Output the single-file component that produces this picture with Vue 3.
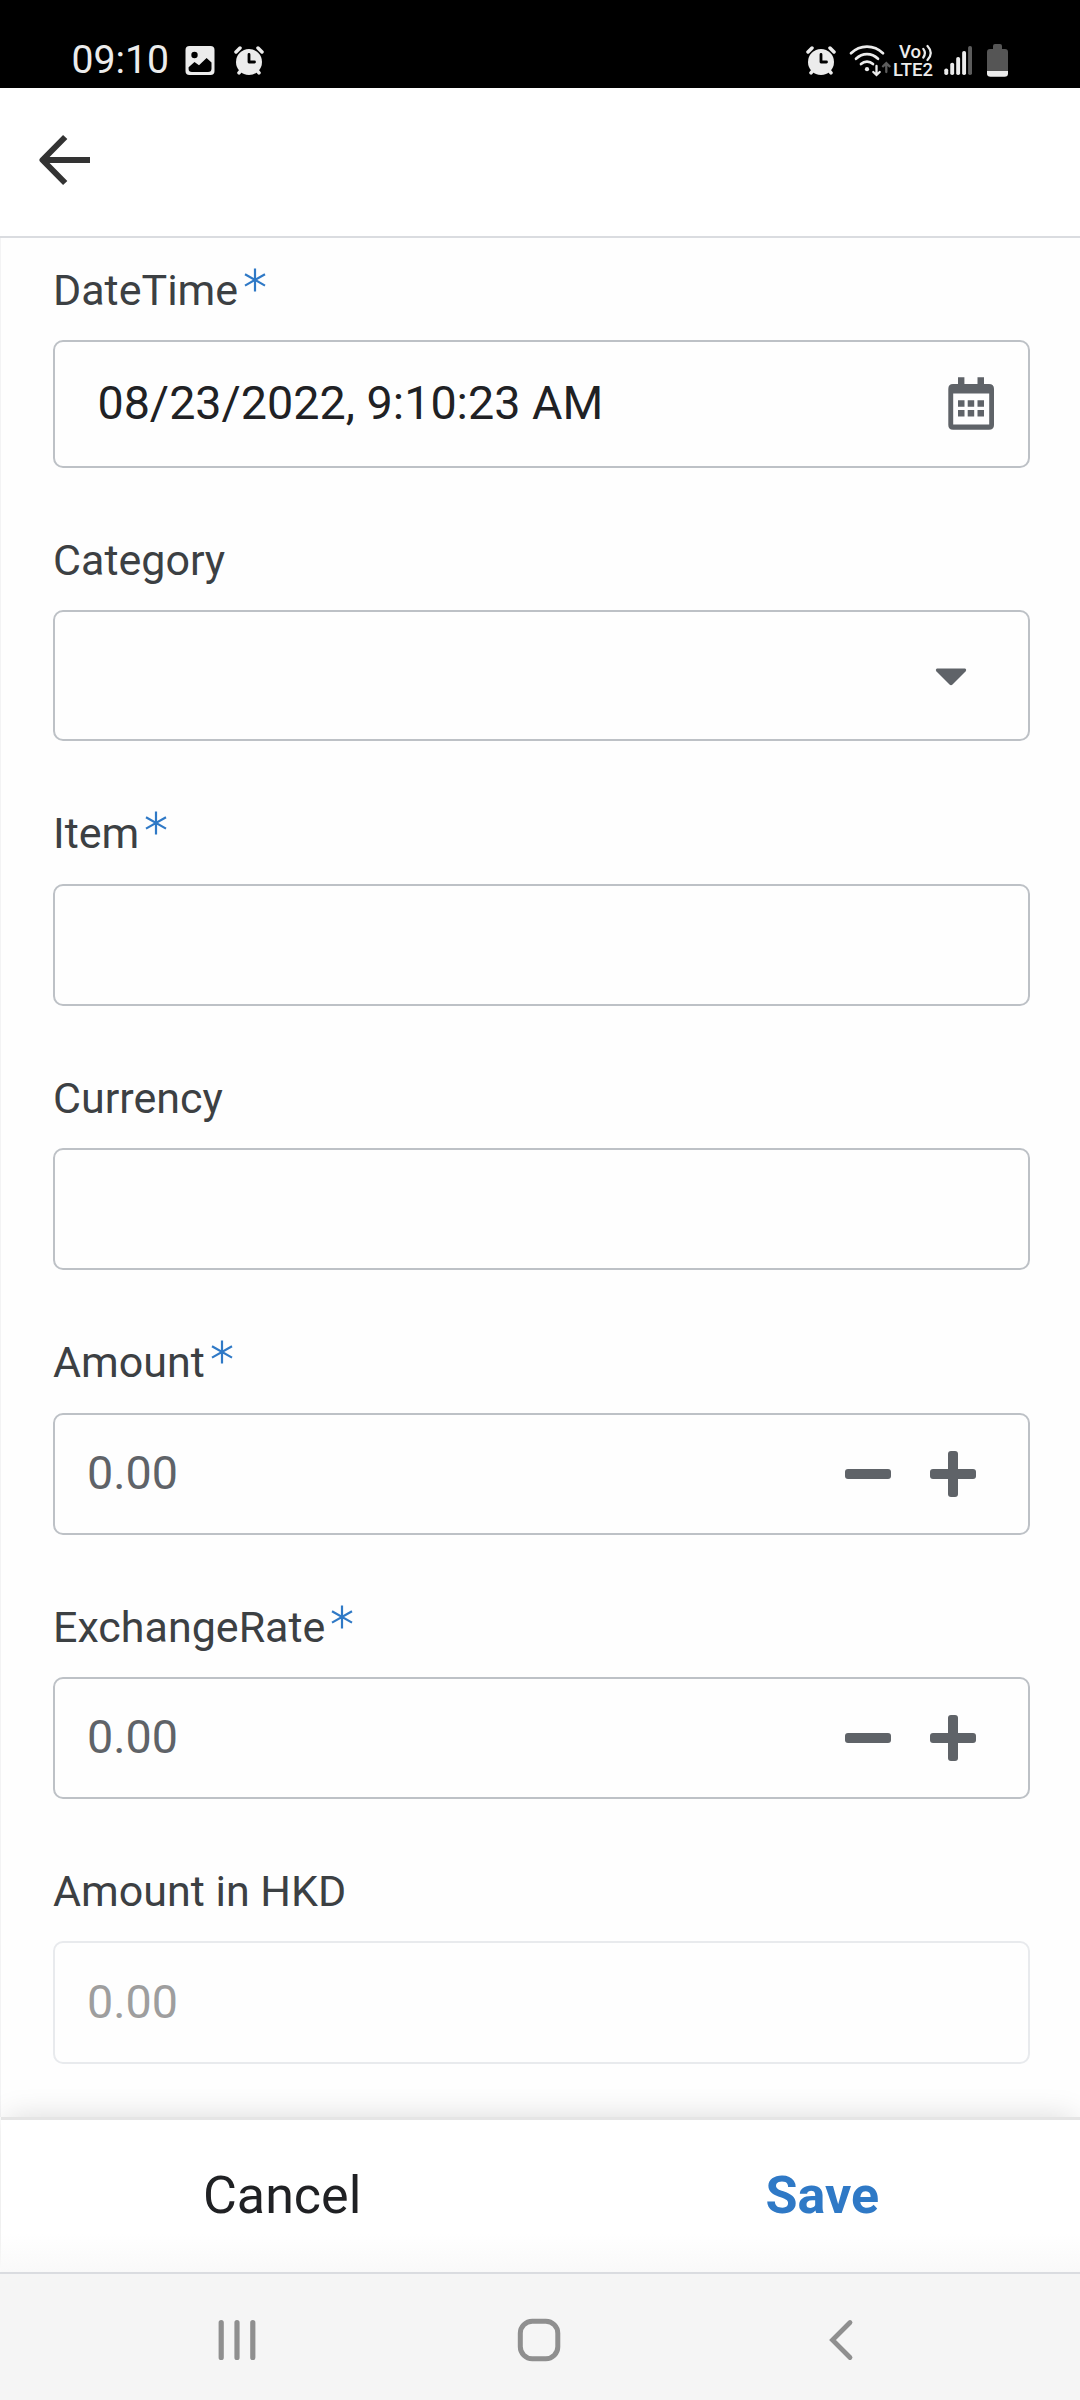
<template>
  <div class="screen">
    <div class="status">
      <div class="status__side">
        <span class="status__time">09:10</span>
        <svg width="30" height="34" viewBox="0 0 30 34">
          <rect x="0.5" y="2" width="29" height="29" rx="4" fill="#ececec" />
          <circle cx="9.5" cy="11" r="3.2" fill="#000" />
          <path d="M3.6 23.2 L9.5 18 L14 21.2 L21.6 14 L26.5 18.6 V24.5 Q26.5 28 23 28 H7 Q3.6 28 3.6 25Z" fill="#000" />
        </svg>
        <svg class="status__alarm" width="30" height="34" viewBox="0 0 30 34">
          <g id="alarm">
            <path d="M2 8 L6 4 M28 8 L24 4 M5 28.8 L8 25 M25 28.8 L22 25" stroke="#ececec" stroke-width="3.5" stroke-linecap="round" />
            <circle cx="15" cy="18" r="13" fill="#ececec" />
            <path d="M15 10.5 V18 H20.5" fill="none" stroke="#000" stroke-width="2.8" stroke-linecap="round" stroke-linejoin="round" />
          </g>
        </svg>
      </div>
      <div class="status__side">
        <svg width="30" height="34" viewBox="0 0 30 34">
          <use href="#alarm" />
        </svg>
        <svg class="status__wifi" width="42" height="34" viewBox="0 0 42 34">
          <g fill="none" stroke="#ececec" stroke-width="2.7" stroke-linecap="round">
            <path d="M2 9.3 C11 0.3 25 0.3 34 9.3" />
            <path d="M7 14.8 C13.5 8.6 22.5 8.6 29 14.8" />
            <path d="M12 20 C15.5 16.8 20.5 16.8 24 20" />
            <path d="M27.5 22 V30.5 M24.3 28 L27.5 31 L30.7 28" stroke-width="2.3" />
            <path d="M37.3 28 V20 M34 22.3 L37.3 19.2 L40.6 22.3" stroke="#5c5c5c" stroke-width="2.3" />
          </g>
          <circle cx="18" cy="25.2" r="2.1" fill="#ececec" />
        </svg>
        <div class="volte">
          <div class="volte__top">
            <span>Vo</span>
            <svg width="12" height="18" viewBox="0 0 12 18">
              <path d="M2.3 4.8 Q5.5 9 2.3 13.5 M6.5 2 Q13 9 6.5 16" fill="none" stroke="#ececec" stroke-width="2.2" stroke-linecap="round" />
            </svg>
          </div>
          <span class="volte__band">LTE2</span>
        </div>
        <svg class="status__signal" width="29" height="34" viewBox="0 0 29 34">
          <rect
            v-for="(top, i) in signalBars"
            :key="top"
            :x="0.3 + i * 5.95"
            :y="top"
            width="3.9"
            :height="31 - top"
            rx="1.8"
            :fill="i < 4 ? '#ececec' : '#5c5c5c'"
          />
        </svg>
        <svg class="status__battery" width="21" height="34" viewBox="0 0 21 34">
          <path d="M6 2 Q6 0 8 0 H13 Q15 0 15 2 V5 H18 Q21 5 21 8 V27 H0 V8 Q0 5 3 5 H6Z" fill="#555" />
          <path d="M0 27 H21 V29.5 Q21 32.8 17.5 32.8 H3.5 Q0 32.8 0 29.5Z" fill="#ececec" />
        </svg>
      </div>
    </div>

    <header class="appbar">
      <svg width="54" height="54" viewBox="0 0 54 54">
        <path d="M51 27 H5 M26.2 4 L3.5 27 L26.2 50" fill="none" stroke="#333" stroke-width="6" stroke-linejoin="round" />
      </svg>
    </header>

    <main class="form">
      <div v-for="field in fields" :key="field.label" class="field" :class="`field--${field.type}`">
        <div class="field__label">
          <span>{{ field.label }}</span>
          <svg v-if="field.required" class="field__star" width="22" height="24" viewBox="0 0 22 24">
            <path d="M11 0.5 V23.5 M1 6.2 L21 17.6 M21 6.2 L1 17.6" stroke="#2f79c6" stroke-width="2.2" />
          </svg>
        </div>
        <div class="field__box">
          <span class="field__value">{{ field.value }}</span>
          <svg v-if="field.type === 'date'" class="field__calendar" width="46" height="53" viewBox="0 0 46 53" fill="#5f6368">
            <path fill-rule="evenodd" d="M5 7 H10 V0.3 H16.4 V7 H29.5 V0.3 H36 V7 H41 Q46 7 46 12 V48 Q46 52.7 41 52.7 H5 Q0.3 52.7 0.3 48 V12 Q0.3 7 5 7Z M5.2 16.4 V47.6 H41.2 V16.4Z" />
            <path d="M10 23.3h6.5v6.5h-6.5z M19.7 23.3h6.5v6.5h-6.5z M29.5 23.3h6.5v6.5h-6.5z M10 33h6.5v6.5h-6.5z M19.7 33h6.5v6.5h-6.5z M29.5 33h6.5v6.5h-6.5z" />
          </svg>
          <svg v-if="field.type === 'select'" class="field__caret" width="32" height="18" viewBox="0 0 32 18">
            <path d="M2 0.5 H30 Q32 1.5 30.5 3.5 L17.5 16.5 Q16 18 14.5 16.5 L1.5 3.5 Q0 1.5 2 0.5Z" fill="#5f6368" />
          </svg>
          <div v-if="field.type === 'number'" class="field__stepper">
            <svg width="46" height="46" viewBox="0 0 46 46" fill="#5f6368">
              <rect x="0" y="18" width="46" height="10" rx="3" />
            </svg>
            <svg width="46" height="46" viewBox="0 0 46 46" fill="#5f6368">
              <rect x="0" y="18" width="46" height="10" rx="3" />
              <rect x="18" y="0" width="10" height="46" rx="3" />
            </svg>
          </div>
        </div>
      </div>
    </main>

    <footer class="actions">
      <span class="actions__cancel">Cancel</span>
      <span class="actions__save">Save</span>
    </footer>

    <nav class="navbar">
      <svg width="42" height="44" viewBox="0 0 42 44">
        <path d="M5.2 4.5 V39.5 M21 4.5 V39.5 M36.8 4.5 V39.5" stroke="#8f8f8f" stroke-width="5.2" stroke-linecap="round" />
      </svg>
      <svg width="44" height="44" viewBox="0 0 44 44">
        <rect x="3.3" y="3.2" width="37.5" height="37.5" rx="12" fill="none" stroke="#8f8f8f" stroke-width="5" />
      </svg>
      <svg width="42" height="44" viewBox="0 0 42 44">
        <path d="M30 4.5 L12.5 22 L30 39.5" fill="none" stroke="#8f8f8f" stroke-width="4.8" stroke-linecap="round" />
      </svg>
    </nav>
  </div>
</template>

<script setup>
// y of each bar's top edge, shortest bar first
const signalBars = [24.5, 18.8, 13, 7, 2];

const fields = [
  { label: 'DateTime', type: 'date', required: true, value: '08/23/2022, 9:10:23 AM' },
  { label: 'Category', type: 'select', value: '' },
  { label: 'Item', type: 'text', required: true, value: '' },
  { label: 'Currency', type: 'text', value: '' },
  { label: 'Amount', type: 'number', required: true, value: '0.00' },
  { label: 'ExchangeRate', type: 'number', required: true, value: '0.00' },
  { label: 'Amount in HKD', type: 'readonly', value: '0.00' },
];
</script>

<style>
body {
  margin: 0;
  background: #fff;
}
</style>

<style scoped>
.screen {
  box-sizing: border-box;
  display: flex;
  flex-direction: column;
  width: 1080px;
  height: 2400px;
  overflow: hidden;
  background: #fefefe;
  font-family: Roboto, "Liberation Sans", sans-serif;
}
.screen svg {
  display: block;
  flex: none;
}

.status {
  box-sizing: border-box;
  display: flex;
  justify-content: space-between;
  flex: 0 0 88px;
  padding: 44px 72px 0 71.5px;
  background: #000;
}
.status__side {
  display: flex;
  height: 34px;
}
.status__time {
  width: 113.5px;
  font-size: 39.2px;
  line-height: 32px;
  color: #ececec;
}
.status__alarm { margin-left: 18.5px; }
.status__wifi { margin-left: 13px; }
.status__signal { margin-left: 8px; }
.status__battery { margin-left: 14px; }

.volte {
  width: 42px;
  margin-left: 3px;
  font-size: 18.5px;
  font-weight: 500;
  line-height: 17px;
  color: #ececec;
}
.volte__top {
  display: flex;
  height: 17px;
  padding-left: 5px;
}
.volte__top span {
  width: 21.5px;
}
.volte__band {
  display: block;
  margin-left: -1px;
  line-height: 18px;
}

.appbar {
  box-sizing: border-box;
  flex: 0 0 150px;
  padding: 45px 39px;
  border-bottom: 2px solid #dadce0;
  background: #fff;
}

.form {
  box-sizing: border-box;
  flex: 0 0 1879px;
  min-height: 0;
  padding: 27.1px 50px 0 52px;
  border-left: 1px solid #f3f3f4;
}
.field {
  margin-bottom: 67px;
}
.field:last-child {
  margin-bottom: 0;
}
.field__label {
  display: flex;
  height: 50px;
  margin-bottom: 25.5px;
  font-size: 43px;
  line-height: 50px;
  color: #3c4043;
}
.field__star {
  margin: 3px 0 0 6px;
}
.field__box {
  box-sizing: border-box;
  display: flex;
  align-items: center;
  justify-content: space-between;
  height: 122px;
  padding: 0 52px 0 32px;
  border: 2px solid #bdc1c6;
  border-radius: 10px;
  background: #fefefe;
}
.field__value {
  margin-top: -1.6px;
  font-size: 46.7px;
  line-height: 54px;
  color: #5f6368;
}
.field__calendar { margin-top: -1px; }
.field__caret { margin-top: 2px; }
.field__stepper {
  display: flex;
  gap: 39px;
}
.field--date .field__label { margin-bottom: 24.5px; }
.field--date .field__box {
  height: 128px;
  padding: 0 34px 0 42.4px;
}
.field--date .field__value { color: #202124; }
.field--select .field__box {
  height: 131px;
  padding-right: 61px;
}
.field--readonly { margin-top: -0.4px; }
.field--readonly .field__box {
  height: 123px;
  border-color: #e8eaed;
}
.field--readonly .field__value { color: #9e9e9e; }

.actions {
  box-sizing: border-box;
  position: relative;
  display: flex;
  align-items: center;
  justify-content: space-between;
  flex: 0 0 155px;
  margin-left: 1px;
  padding: 0 201px 2px 202px;
  border-top: 3px solid #e5e5e5;
  background: linear-gradient(#fff 75%, #f9f9f9);
  box-shadow: 0 -4px 30px -6px rgba(0, 0, 0, 0.16);
  font-size: 52px;
}
.actions__cancel { color: #202124; }
.actions__save {
  font-weight: 700;
  color: #2f79c6;
}

.navbar {
  box-sizing: border-box;
  position: relative;
  display: flex;
  justify-content: space-between;
  flex: 1;
  padding: 44px 218px 0 216px;
  border-top: 2px solid #dadce0;
  background: #f5f5f5;
}
</style>
